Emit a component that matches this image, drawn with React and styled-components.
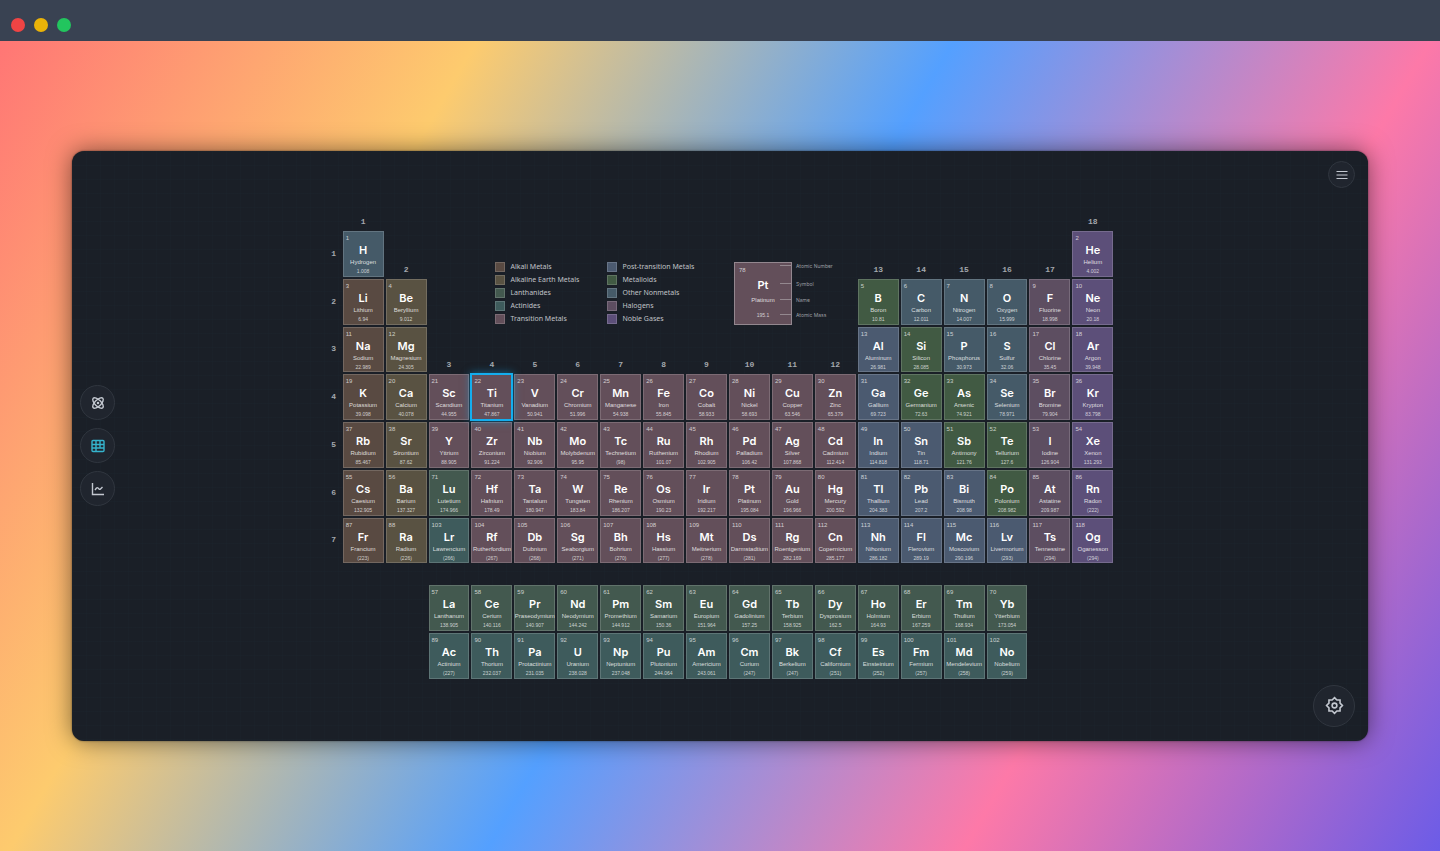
// App.jsx
import React, { useState } from 'react';
import styled, { createGlobalStyle, css } from 'styled-components';
import { Atom } from 'lucide-react';

const GlobalStyle = createGlobalStyle`
  * {
    box-sizing: border-box;
  }

  body {
    margin: 0;
    font-family: "Inter", "Liberation Sans", sans-serif;
  }

  button {
    font: inherit;
    padding: 0;
    cursor: pointer;
  }
`;

const COLORS = {
  alkali: '#594a42',
  alkaline: '#595242',
  lanthanide: '#43594f',
  actinide: '#3e5b5c',
  transition: '#634f5a',
  post: '#4b5a70',
  metalloid: '#415a43',
  nonmetal: '#455a68',
  halogen: '#5d4e61',
  noble: '#5c4f79',
};

const LEGEND = [
  ['alkali', 'Alkali Metals'],
  ['alkaline', 'Alkaline Earth Metals'],
  ['lanthanide', 'Lanthanides'],
  ['actinide', 'Actinides'],
  ['transition', 'Transition Metals'],
  ['post', 'Post-transition Metals'],
  ['metalloid', 'Metalloids'],
  ['nonmetal', 'Other Nonmetals'],
  ['halogen', 'Halogens'],
  ['noble', 'Noble Gases'],
];

// period, first group, then "number symbol name mass category"
const BLOCKS = [
  [1, 1, '1 H Hydrogen 1.008 nonmetal'],
  [1, 18, '2 He Helium 4.002 noble'],
  [2, 1, '3 Li Lithium 6.94 alkali|4 Be Beryllium 9.012 alkaline'],
  [2, 13, '5 B Boron 10.81 metalloid|6 C Carbon 12.011 nonmetal|7 N Nitrogen 14.007 nonmetal|8 O Oxygen 15.999 nonmetal|9 F Fluorine 18.998 halogen|10 Ne Neon 20.18 noble'],
  [3, 1, '11 Na Sodium 22.989 alkali|12 Mg Magnesium 24.305 alkaline'],
  [3, 13, '13 Al Aluminum 26.981 post|14 Si Silicon 28.085 metalloid|15 P Phosphorus 30.973 nonmetal|16 S Sulfur 32.06 nonmetal|17 Cl Chlorine 35.45 halogen|18 Ar Argon 39.948 noble'],
  [4, 1, '19 K Potassium 39.098 alkali|20 Ca Calcium 40.078 alkaline|21 Sc Scandium 44.955 transition|22 Ti Titanium 47.867 transition|23 V Vanadium 50.941 transition|24 Cr Chromium 51.996 transition|25 Mn Manganese 54.938 transition|26 Fe Iron 55.845 transition|27 Co Cobalt 58.933 transition|28 Ni Nickel 58.693 transition|29 Cu Copper 63.546 transition|30 Zn Zinc 65.379 transition|31 Ga Gallium 69.723 post|32 Ge Germanium 72.63 metalloid|33 As Arsenic 74.921 metalloid|34 Se Selenium 78.971 nonmetal|35 Br Bromine 79.904 halogen|36 Kr Krypton 83.798 noble'],
  [5, 1, '37 Rb Rubidium 85.467 alkali|38 Sr Strontium 87.62 alkaline|39 Y Yttrium 88.905 transition|40 Zr Zirconium 91.224 transition|41 Nb Niobium 92.906 transition|42 Mo Molybdenum 95.95 transition|43 Tc Technetium (98) transition|44 Ru Ruthenium 101.07 transition|45 Rh Rhodium 102.905 transition|46 Pd Palladium 106.42 transition|47 Ag Silver 107.868 transition|48 Cd Cadmium 112.414 transition|49 In Indium 114.818 post|50 Sn Tin 118.71 post|51 Sb Antimony 121.76 metalloid|52 Te Tellurium 127.6 metalloid|53 I Iodine 126.904 halogen|54 Xe Xenon 131.293 noble'],
  [6, 1, '55 Cs Caesium 132.905 alkali|56 Ba Barium 137.327 alkaline|71 Lu Lutetium 174.966 lanthanide|72 Hf Hafnium 178.49 transition|73 Ta Tantalum 180.947 transition|74 W Tungsten 183.84 transition|75 Re Rhenium 186.207 transition|76 Os Osmium 190.23 transition|77 Ir Iridium 192.217 transition|78 Pt Platinum 195.084 transition|79 Au Gold 196.966 transition|80 Hg Mercury 200.592 transition|81 Tl Thallium 204.383 post|82 Pb Lead 207.2 post|83 Bi Bismuth 208.98 post|84 Po Polonium 208.982 metalloid|85 At Astatine 209.987 halogen|86 Rn Radon (222) noble'],
  [7, 1, '87 Fr Francium (223) alkali|88 Ra Radium (226) alkaline|103 Lr Lawrencium (266) actinide|104 Rf Rutherfordium (267) transition|105 Db Dubnium (268) transition|106 Sg Seaborgium (271) transition|107 Bh Bohrium (270) transition|108 Hs Hassium (277) transition|109 Mt Meitnerium (278) transition|110 Ds Darmstadtium (281) transition|111 Rg Roentgenium 282.169 transition|112 Cn Copernicium 285.177 transition|113 Nh Nihonium 286.182 post|114 Fl Flerovium 289.19 post|115 Mc Moscovium 290.196 post|116 Lv Livermorium (293) post|117 Ts Tennessine (294) halogen|118 Og Oganesson (294) noble'],
  [9, 3, '57 La Lanthanum 138.905 lanthanide|58 Ce Cerium 140.116 lanthanide|59 Pr Praseodymium 140.907 lanthanide|60 Nd Neodymium 144.242 lanthanide|61 Pm Promethium 144.912 lanthanide|62 Sm Samarium 150.36 lanthanide|63 Eu Europium 151.964 lanthanide|64 Gd Gadolinium 157.25 lanthanide|65 Tb Terbium 158.925 lanthanide|66 Dy Dysprosium 162.5 lanthanide|67 Ho Holmium 164.93 lanthanide|68 Er Erbium 167.259 lanthanide|69 Tm Thulium 168.934 lanthanide|70 Yb Ytterbium 173.054 lanthanide'],
  [10, 3, '89 Ac Actinium (227) actinide|90 Th Thorium 232.037 actinide|91 Pa Protactinium 231.035 actinide|92 U Uranium 238.028 actinide|93 Np Neptunium 237.048 actinide|94 Pu Plutonium 244.064 actinide|95 Am Americium 243.061 actinide|96 Cm Curium (247) actinide|97 Bk Berkelium (247) actinide|98 Cf Californium (251) actinide|99 Es Einsteinium (252) actinide|100 Fm Fermium (257) actinide|101 Md Mendelevium (258) actinide|102 No Nobelium (259) actinide'],
];

const ELEMENTS = BLOCKS.flatMap(([row, group, list]) =>
  list.split('|').map((item, i) => {
    const [number, symbol, name, mass, kind] = item.split(' ');
    return { number, symbol, name, mass, kind, row, group: group + i };
  })
);

// grid row each group number sits in, just above its first element
const GROUP_ROWS = [1, 2, 4, 4, 4, 4, 4, 4, 4, 4, 4, 4, 2, 2, 2, 2, 2, 1];

const Page = styled.div`
  display: flex;
  flex-direction: column;
  min-height: 100vh;
`;

const TitleBar = styled.header`
  display: flex;
  align-items: center;
  gap: 9px;
  height: 41px;
  padding: 9px 11px 0;
  background: #394252;
`;

const Dot = styled.button`
  width: 14px;
  height: 14px;
  border: 0;
  border-radius: 50%;
  background: ${(p) => p.$color};
`;

const Desktop = styled.main`
  flex: 1;
  display: flex;
  align-items: center;
  justify-content: center;
  background: linear-gradient(120deg, #ff7675, #fdcb6e 25%, #54a0ff 50%, #fd79a8 75%, #6c5ce7);
`;

const Panel = styled.section`
  display: grid;
  grid-template-columns: 1fr 60.7% 1fr;
  width: 90%;
  aspect-ratio: 11 / 5;
  border-radius: 12px;
  background-color: #1a1f27;
  background-image:
    linear-gradient(rgba(60, 100, 110, 0.03) 1px, transparent 1px),
    linear-gradient(90deg, rgba(60, 100, 110, 0.03) 1px, transparent 1px);
  background-size: 14px 14px;
  box-shadow: 0 0 24px rgba(0, 0, 0, 0.5), 0 0 2px rgba(0, 0, 0, 0.5);
`;

const SideNav = styled.nav`
  display: flex;
  flex-direction: column;
  justify-content: center;
  gap: 8px;
  padding-left: 8px;
`;

const Tools = styled.div`
  display: flex;
  flex-direction: column;
  justify-content: space-between;
  align-items: flex-end;
  padding: 10px 13px 14px;
`;

const RoundButton = styled.button`
  display: flex;
  align-items: center;
  justify-content: center;
  width: ${(p) => p.$size}px;
  height: ${(p) => p.$size}px;
  border: 1px solid #30363f;
  border-radius: 50%;
  background: #20252e;
  color: ${(p) => (p.$active ? '#35b4cd' : '#c3c8d0')};
`;

const Table = styled.div`
  display: grid;
  grid-template-columns: 14px repeat(18, 1fr);
  grid-template-rows: 16px repeat(7, auto) 18px;
  gap: 2px;
  align-content: center;
`;

const AxisLabel = styled.span`
  grid-column: ${(p) => p.$col};
  grid-row: ${(p) => p.$row};
  justify-self: center;
  align-self: ${(p) => (p.$side ? 'center' : 'end')};
  padding-bottom: ${(p) => (p.$side ? 0 : 2)}px;
  color: #a4a8ad;
  font: bold 8px/10px "Liberation Mono", monospace;
`;

const Cell = styled.button`
  grid-column: ${(p) => p.$col};
  grid-row: ${(p) => p.$row};
  display: flex;
  flex-direction: column;
  align-items: center;
  min-width: 0;
  min-height: 0;
  aspect-ratio: 17 / 19;
  padding-top: 2px;
  border: 1px solid rgba(255, 255, 255, 0.16);
  background: ${(p) => COLORS[p.$kind]};
  color: #fff;
  white-space: nowrap;

  ${(p) =>
    p.$selected &&
    css`
      z-index: 1;
      outline: 2px solid #14aeee;
      outline-offset: -1px;
      box-shadow: 0 0 8px 1px rgba(20, 174, 238, 0.5);
    `}
`;

const Number = styled.span`
  align-self: flex-start;
  padding-left: 2px;
  color: rgba(255, 255, 255, 0.72);
  font: 6px/8px "Liberation Sans", sans-serif;
`;

const Symbol = styled.span`
  font-size: 11px;
  font-weight: 600;
  line-height: 16px;
`;

const Name = styled.span`
  color: rgba(255, 255, 255, 0.8);
  font: 6px/8px "Liberation Sans", sans-serif;
`;

const Mass = styled.span`
  color: rgba(255, 255, 255, 0.72);
  font: 5px/11px "Liberation Sans", sans-serif;
`;

const Legend = styled.ul`
  grid-column: 5 / 11;
  grid-row: 2 / 4;
  align-self: end;
  display: grid;
  grid-template-columns: 112px auto;
  grid-template-rows: repeat(5, 12px);
  grid-auto-flow: column;
  justify-content: start;
  row-gap: 1px;
  margin: 0;
  padding: 0 0 0 24px;
  list-style: none;
`;

const LegendItem = styled.li`
  display: flex;
  align-items: center;
  gap: 5px;
  color: #c0c3c7;
  font: 7px/12px "Noto Sans", sans-serif;
  white-space: nowrap;
`;

const Swatch = styled.span`
  width: 10px;
  height: 10px;
  border: 1px solid rgba(255, 255, 255, 0.16);
  background: ${(p) => COLORS[p.$kind]};
`;

const Sample = styled.div`
  grid-column: 11 / 15;
  grid-row: 2 / 4;
  align-self: end;
  display: flex;
  padding-left: 5px;
`;

const SampleCell = styled.div`
  display: flex;
  flex-direction: column;
  align-items: center;
  width: 58px;
  height: 63px;
  padding-top: 3px;
  border: 1px solid #93878f;
  background: ${COLORS.transition};
  color: #fff;
`;

const SampleNumber = styled(Number)`
  padding-left: 4px;
`;

const SampleSymbol = styled(Symbol)`
  line-height: 22px;
`;

const SampleMass = styled(Mass)`
  padding-top: 6px;
`;

const Callouts = styled.div`
  display: grid;
  grid-template-rows: 8px 18px 16px 15px;
  align-items: end;
  align-content: start;
  margin-left: -12px;
`;

const Callout = styled.span`
  display: flex;
  align-items: center;
  gap: 4px;
  color: #9a9ea3;
  font-size: 5px;
  line-height: 8px;
  white-space: nowrap;

  &::before {
    content: '';
    width: 12px;
    height: 1px;
    background: #94888f;
  }
`;

const TableIcon = () => (
  <svg width="14" height="14" viewBox="0 0 28 28" fill="none" stroke="currentColor" strokeWidth="2.8">
    <rect x="2" y="3" width="24" height="22" rx="2" />
    <path d="M2 11h24M2 18h24M10 3v22M18 3v15" />
  </svg>
);

const ChartIcon = () => (
  <svg width="14" height="14" viewBox="0 0 28 28" fill="none" stroke="currentColor" strokeWidth="2.8">
    <path d="M3 2v23h23" />
    <path d="M8 16l3-4c1-1 2-1 3 0l2 2c1 1 2 1 3 0l4-4" />
  </svg>
);

const MenuIcon = () => (
  <svg width="12" height="12" viewBox="0 0 12 12" stroke="currentColor" strokeWidth="1.2">
    <path d="M.5 2.5h11M.5 6h11M.5 9.5h11" />
  </svg>
);

const GearIcon = () => (
  <svg width="19" height="19" viewBox="0 0 24 24" fill="none" stroke="currentColor" strokeWidth="2">
    <path d="M12 2l3 3h4v4l3 3-3 3v4h-4l-3 3-3-3H5v-4l-3-3 3-3V5h4z" />
    <circle cx="12" cy="12" r="3" />
  </svg>
);

const App = () => {
  const [selected, setSelected] = useState('Ti');

  return (
    <>
      <GlobalStyle />
      <Page>
        <TitleBar>
          <Dot $color="#ef4444" aria-label="Close" />
          <Dot $color="#eab308" aria-label="Minimize" />
          <Dot $color="#22c55e" aria-label="Maximize" />
        </TitleBar>
        <Desktop>
          <Panel>
            <SideNav>
              <RoundButton $size={35} aria-label="Atom">
                <Atom size={14} strokeWidth={2.4} />
              </RoundButton>
              <RoundButton $size={35} $active aria-label="Table">
                <TableIcon />
              </RoundButton>
              <RoundButton $size={35} aria-label="Chart">
                <ChartIcon />
              </RoundButton>
            </SideNav>

            <Table>
              {GROUP_ROWS.map((row, i) => (
                <AxisLabel key={`g${i}`} $col={i + 2} $row={row}>
                  {i + 1}
                </AxisLabel>
              ))}
              {[1, 2, 3, 4, 5, 6, 7].map((period) => (
                <AxisLabel key={`p${period}`} $side $col={1} $row={period + 1}>
                  {period}
                </AxisLabel>
              ))}

              <Legend>
                {LEGEND.map(([kind, label]) => (
                  <LegendItem key={kind}>
                    <Swatch $kind={kind} />
                    {label}
                  </LegendItem>
                ))}
              </Legend>

              <Sample>
                <SampleCell>
                  <SampleNumber>78</SampleNumber>
                  <SampleSymbol>Pt</SampleSymbol>
                  <Name>Platinum</Name>
                  <SampleMass>195.1</SampleMass>
                </SampleCell>
                <Callouts>
                  <Callout>Atomic Number</Callout>
                  <Callout>Symbol</Callout>
                  <Callout>Name</Callout>
                  <Callout>Atomic Mass</Callout>
                </Callouts>
              </Sample>

              {ELEMENTS.map((el) => (
                <Cell
                  key={el.number}
                  $col={el.group + 1}
                  $row={el.row + 1}
                  $kind={el.kind}
                  $selected={el.symbol === selected}
                  onClick={() => setSelected(el.symbol)}
                >
                  <Number>{el.number}</Number>
                  <Symbol>{el.symbol}</Symbol>
                  <Name>{el.name}</Name>
                  <Mass>{el.mass}</Mass>
                </Cell>
              ))}
            </Table>

            <Tools>
              <RoundButton $size={27} aria-label="Menu">
                <MenuIcon />
              </RoundButton>
              <RoundButton $size={42} aria-label="Settings">
                <GearIcon />
              </RoundButton>
            </Tools>
          </Panel>
        </Desktop>
      </Page>
    </>
  );
};

export default App;
